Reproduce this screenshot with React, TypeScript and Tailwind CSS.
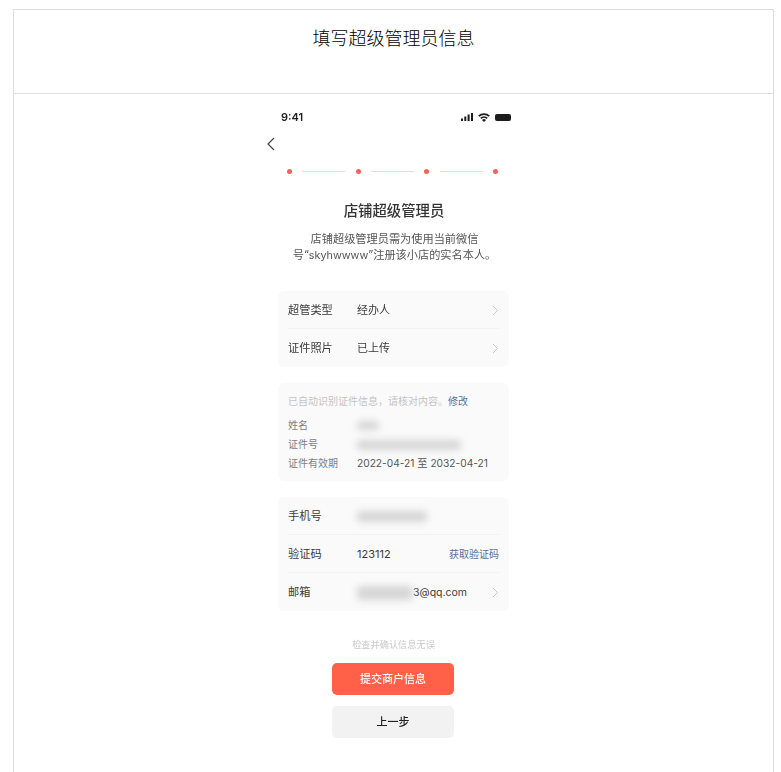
import React from 'react';

const CJK = "font-['Inter','Noto_Sans_CJK_SC',sans-serif]";

function Chevron() {
  return (
    <svg width="7" height="11" viewBox="0 0 7 11" fill="none" className="shrink-0">
      <path d="M1 1l4.5 4.5L1 10" stroke="#c8c8c8" strokeWidth="1" />
    </svg>
  );
}

function Row({ label, value, chevron = true, last = false }: { label: string; value: React.ReactNode; chevron?: boolean; last?: boolean }) {
  return (
    <div className={`flex items-center h-[38px] pt-[1px] ${last ? '' : 'border-b border-[#f2f2f2]'}`}>
      <span className="w-[69px] text-[11.2px] text-[#3a3a3a]">{label}</span>
      <div className="flex-1 text-[11px] text-[#3a3a3a]">{value}</div>
      {chevron && <Chevron />}
    </div>
  );
}

function Smudge({ w, h = 'h-[9px]' }: { w: string; h?: string }) {
  return <div className={`${w} ${h} rounded-sm bg-[#d6d6d6] blur-[3.5px]`} />;
}

function InfoRow({ label, children }: { label: string; children: React.ReactNode }) {
  return (
    <div className="flex items-center h-[19px]">
      <span className="w-[69px] text-[10px] text-[#808080]">{label}</span>
      {children}
    </div>
  );
}

function StatusIcons() {
  return (
    <div className="flex items-center gap-[5px]">
      <svg width="12" height="8" viewBox="0 0 12 8" fill="#1c1c1c">
        <rect x="0" y="5.5" width="2" height="2.5" />
        <rect x="3.3" y="3.5" width="2" height="4.5" />
        <rect x="6.6" y="1.5" width="2" height="6.5" />
        <rect x="10" y="0" width="2" height="8" />
      </svg>
      <svg width="12" height="9" viewBox="0 0 12 9" fill="none" stroke="#1c1c1c" strokeWidth="1.8">
        <path d="M.8 3.2a7.5 7.5 0 0 1 10.4 0" />
        <path d="M2.8 5.4a4.6 4.6 0 0 1 6.4 0" />
        <path d="M6 9L4 7a2.8 2.8 0 0 1 4 0z" fill="#1c1c1c" stroke="none" />
      </svg>
      <div className="w-[16px] h-[7px] rounded-[2px] bg-[#1c1c1c]" />
    </div>
  );
}

function Steps() {
  return (
    <div className="flex items-center justify-between pl-[24px] pr-[25px] mt-[18px]">
      {[0, 1, 2, 3].map((i) => (
        <React.Fragment key={i}>
          <div className="w-[5px] h-[5px] rounded-full bg-[#f4605a]" />
          {i < 3 && <div className="w-[43px] h-px bg-[#f3d9d5]" />}
        </React.Fragment>
      ))}
    </div>
  );
}

export default function App() {
  return (
    <div className={`h-[772px] overflow-hidden bg-white pt-[9px] pl-[13px] pr-[7px] ${CJK}`}>
      <div className="h-full border-l border-r border-t border-[#dedede]">
        <div className="h-[84px] border-b border-[#dedede] pt-[15px] text-center text-[18px] leading-[27px] font-light text-black">
          填写超级管理员信息
        </div>

        <div className="w-[260px] ml-[249px] pt-[13px] blur-[0.6px]">
          <div className="flex items-center justify-between pl-[18px] pr-[12px] h-[20px]">
            <span className="text-[11px] font-semibold text-[#222]">9:41</span>
            <StatusIcons />
          </div>

          <svg width="8" height="14" viewBox="0 0 8 14" fill="none" className="ml-[4px] mt-[10px]">
            <path d="M7 1L1 7l6 6" stroke="#444" strokeWidth="1.2" />
          </svg>

          <Steps />

          <h1 className="mt-[26px] text-center text-[14.4px] leading-[22px] font-medium text-[#333] pl-[2px]">店铺超级管理员</h1>
          <p className="mt-[9px] text-center text-[11.2px] leading-[16px] text-[#555] pl-[3px]">
            店铺超级管理员需为使用当前微信
            <br />
            号“<span className="text-[10.8px]">skyhwwww</span>”注册该小店的实名本人。
          </p>

          <div className="mt-[27px] ml-[15px] w-[231px] flex flex-col gap-[16px]">
            <div className="rounded-[6px] bg-[#fafafa] px-[10px]">
              <Row label="超管类型" value="经办人" />
              <Row label="证件照片" value="已上传" last />
            </div>

            <div className="rounded-[6px] bg-[#fafafa] px-[10px] pt-[11px] h-[98px]">
              <div className="text-[10px] leading-[14px] text-[#c4c4c4] mb-[8px] whitespace-nowrap">
                已自动识别证件信息，请核对内容。<span className="text-[#5b6f96]">修改</span>
              </div>
              <InfoRow label="姓名"><Smudge w="w-[22px]" /></InfoRow>
              <InfoRow label="证件号"><Smudge w="w-[104px]" h="h-[10px]" /></InfoRow>
              <InfoRow label="证件有效期">
                <span className="text-[10.2px] text-[#555] whitespace-nowrap">2022-04-21 至 2032-04-21</span>
              </InfoRow>
            </div>

            <div className="rounded-[6px] bg-[#fafafa] px-[10px]">
              <Row label="手机号" value={<Smudge w="w-[70px]" h="h-[11px]" />} chevron={false} />
              <Row
                label="验证码"
                value={
                  <div className="flex items-center justify-between">
                    <span>123112</span>
                    <span className="text-[10px] text-[#5b6f96]">获取验证码</span>
                  </div>
                }
                chevron={false}
              />
              <Row
                label="邮箱"
                value={
                  <div className="flex items-center">
                    <Smudge w="w-[56px]" h="h-[14px]" />
                    <span className="text-[10.5px]">3@qq.com</span>
                  </div>
                }
                last
              />
            </div>
          </div>

          <div className="mt-[28px] pl-[15px] w-[246px] text-center text-[9.2px] leading-[12px] text-[#c8c8c8]">检查并确认信息无误</div>

          <div className="mt-[12px] ml-[69px] w-[122px] flex flex-col gap-[11px]">
            <button className="h-[32px] rounded-[5px] bg-[#ff6047] text-[11px] font-medium text-white">提交商户信息</button>
            <button className="h-[32px] rounded-[5px] bg-[#f2f2f2] text-[11px] font-medium text-[#222]">上一步</button>
          </div>
        </div>
      </div>
    </div>
  );
}
